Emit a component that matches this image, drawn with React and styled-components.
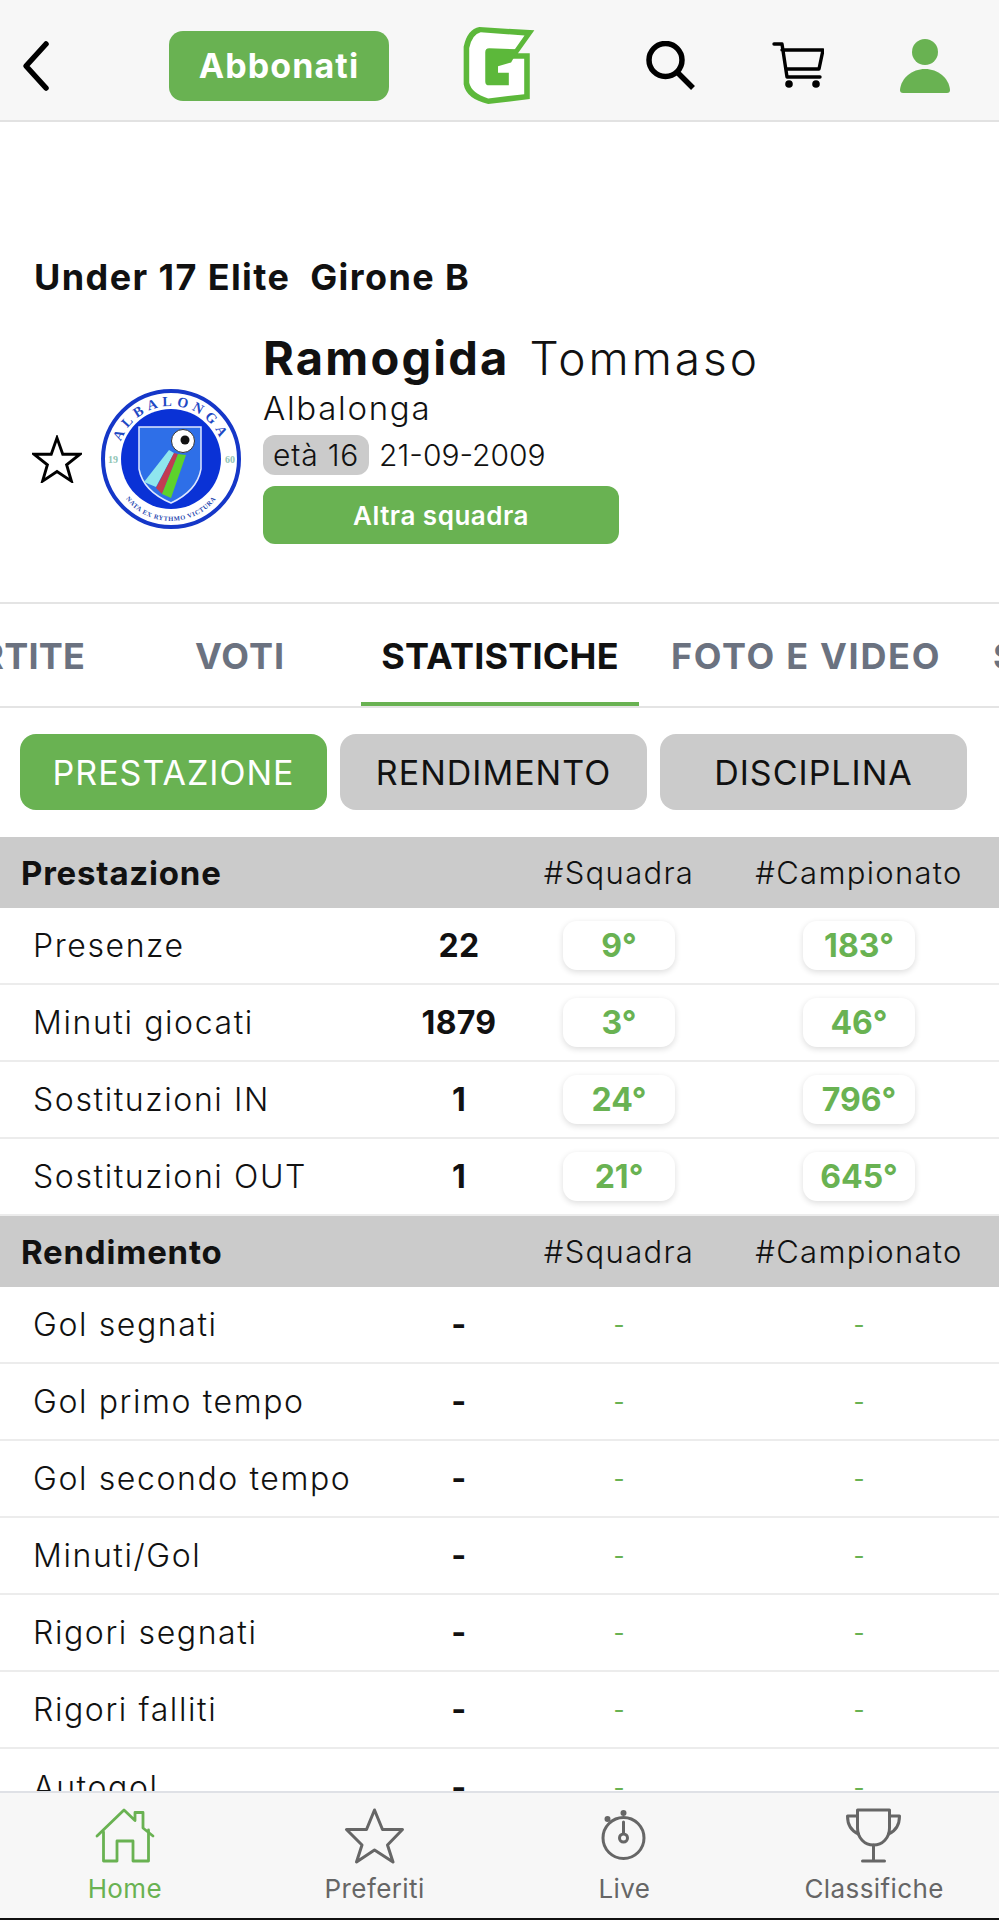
import React from 'react'
import styled, { createGlobalStyle } from 'styled-components'

const GREEN = '#69b252'
const FONT = 'Inter, "Noto Sans", sans-serif'

const Global = createGlobalStyle`
  html, body { margin: 0; padding: 0; background: #fff; }
  * { box-sizing: border-box; }
`
const Page = styled.div`
  width: 999px;
  height: 1920px;
  display: flex;
  flex-direction: column;
  overflow: hidden;
  background: #fff;
  font-family: ${FONT};
  color: #111;
`
const Header = styled.header`
  flex: none;
  height: 122px;
  background: #f7f7f7;
  border-bottom: 2px solid #e2e2e2;
  display: flex;
  align-items: center;
  padding: 11px 0 0 22px;
`
const BackIcon = styled.svg`
  width: 28px;
  height: 52px;
  margin-right: 119px;
`
const SubscribeButton = styled.button`
  width: 220px;
  height: 70px;
  border: 0;
  border-radius: 14px;
  background: ${GREEN};
  color: #fff;
  font: 700 34px ${FONT};
  letter-spacing: 1.1px;
  margin-right: 74px;
`
const LogoSvg = styled.svg`
  width: 72px;
  height: 78px;
  margin-right: 111px;
`
const SearchSvg = styled.svg`
  width: 50px;
  height: 50px;
  margin-right: 76px;
`
const CartSvg = styled.svg`
  width: 52px;
  height: 48px;
  margin-right: 76px;
`
const UserSvg = styled.svg`
  width: 50px;
  height: 54px;
`
const Scroll = styled.main`
  flex: 1;
  min-height: 0;
  overflow: hidden;
`
const Profile = styled.section`
  padding: 135px 0 58px 34px;
  border-bottom: 2px solid #e4e4e4;
`
const League = styled.h1`
  margin: 0 0 33px;
  font-size: 36px;
  line-height: 40px;
  font-weight: 700;
  white-space: pre;
  letter-spacing: 1.4px;
`
const ProfileRow = styled.div`
  display: flex;
  align-items: flex-end;
`
const Badge = styled.div`
  display: flex;
  align-items: center;
  height: 142px;
  margin-bottom: 14px;
  margin-right: 20px;
`
const StarSvg = styled.svg`
  width: 50px;
  height: 48px;
  margin-left: -2px;
  margin-right: 19px;
`
const Crest = styled.svg`
  width: 142px;
  height: 142px;
`
const Info = styled.div`
  display: flex;
  flex-direction: column;
  align-items: flex-start;
`
const NameLine = styled.div`
  display: flex;
  gap: 20px;
  line-height: 56px;
`
const Surname = styled.strong`
  font-size: 47px;
  font-weight: 700;
  letter-spacing: 2.2px;
`
const FirstName = styled.span`
  font-size: 46px;
  font-weight: 300;
  letter-spacing: 3px;
`
const Club = styled.div`
  font-size: 33px;
  font-weight: 300;
  line-height: 44px;
  letter-spacing: 1.7px;
`
const MetaRow = styled.div`
  display: flex;
  align-items: center;
  gap: 10px;
  margin-top: 5px;
  font-size: 30px;
  font-weight: 300;
`
const AgePill = styled.span`
  height: 40px;
  line-height: 40px;
  padding: 0 10px;
  border-radius: 12px;
  background: #cbcbcb;
  letter-spacing: 0.8px;
`
const OtherTeam = styled.button`
  width: 356px;
  height: 58px;
  margin-top: 11px;
  border: 0;
  border-radius: 12px;
  background: ${GREEN};
  color: #fff;
  font: 600 26px ${FONT};
  letter-spacing: 0.5px;
`
const Tabs = styled.nav`
  height: 104px;
  display: flex;
  border-bottom: 2px solid #e4e4e4;
  overflow: hidden;
`
const Tab = styled.div`
  flex: none;
  width: ${p => p.$w}px;
  margin-right: ${p => p.$gap || 0}px;
  display: flex;
  align-items: center;
  justify-content: ${p => p.$edge || 'center'};
  height: 104px;
  white-space: nowrap;
  overflow: hidden;
  font-size: 36px;
  font-weight: 700;
  letter-spacing: ${p => p.$ls || 0.2}px;
  color: ${p => (p.$active ? '#111' : '#6b7280')};
  border-bottom: ${p => (p.$active ? `6px solid ${GREEN}` : '0')};
  padding-top: ${p => (p.$active ? '6px' : '0')};
`
const Filters = styled.div`
  display: flex;
  gap: 13px;
  padding: 26px 0 27px 20px;
`
const Filter = styled.button`
  width: 307px;
  height: 76px;
  border: 0;
  border-radius: 16px;
  background: ${p => (p.$active ? GREEN : '#cbcbcb')};
  color: ${p => (p.$active ? '#fff' : '#111')};
  font: 400 34px ${FONT};
  letter-spacing: 1px;
`
const Columns = styled.div`
  display: grid;
  grid-template-columns: 399px 120px 200px 280px;
  align-items: center;
`
const SectionHead = styled(Columns)`
  height: 71px;
  background: #cbcbcb;
  font-size: 31px;
  font-weight: 300;
  letter-spacing: 1.3px;
`
const SectionTitle = styled.div`
  padding-left: 21px;
  font-size: 33px;
  font-weight: 700;
  letter-spacing: 0.8px;
`
const ColTitle = styled.div`
  grid-column: ${p => p.$col};
  text-align: center;
  white-space: nowrap;
`
const Row = styled(Columns)`
  height: 77px;
  border-bottom: 2px solid #ececec;
  &:last-child { border-bottom: 0; }
`
const Label = styled.div`
  padding-left: 33px;
  font-size: 32px;
  font-weight: 300;
  letter-spacing: 1.6px;
`
const Value = styled.div`
  text-align: center;
  font-size: 32px;
  font-weight: 700;
  letter-spacing: 0.3px;
`
const Rank = styled.div`
  justify-self: center;
  width: 112px;
  height: 49px;
  line-height: 49px;
  border-radius: 14px;
  background: #fff;
  box-shadow: 0 2px 6px rgba(0, 0, 0, 0.14);
  text-align: center;
  color: ${GREEN};
  font-size: 32px;
  font-weight: 700;
`
const NoRank = styled.div`
  text-align: center;
  color: ${GREEN};
  font-size: 24px;
`
const BottomNav = styled.footer`
  flex: none;
  height: 129px;
  background: #f7f7f7;
  border-top: 2px solid #dfe1e6;
  border-bottom: 2px solid #111;
  display: grid;
  grid-template-columns: repeat(4, 1fr);
`
const NavItem = styled.div`
  display: flex;
  flex-direction: column;
  align-items: center;
  padding-top: 15px;
  color: ${p => (p.$active ? GREEN : '#666')};
  font-size: 26px;
  font-weight: 400;
  letter-spacing: 0.4px;
`
const NavIcon = styled.svg`
  width: 64px;
  height: 56px;
`
const NavLabel = styled.span`
  margin-top: 10px;
  line-height: 30px;
`

const performance = [
  ['Presenze', '22', '9°', '183°'],
  ['Minuti giocati', '1879', '3°', '46°'],
  ['Sostituzioni IN', '1', '24°', '796°'],
  ['Sostituzioni OUT', '1', '21°', '645°'],
]
const output = ['Gol segnati', 'Gol primo tempo', 'Gol secondo tempo', 'Minuti/Gol', 'Rigori segnati', 'Rigori falliti', 'Autogol']

const Head = ({ title }) => (
  <SectionHead>
    <SectionTitle>{title}</SectionTitle>
    <ColTitle $col={3}>#Squadra</ColTitle>
    <ColTitle $col={4}>#Campionato</ColTitle>
  </SectionHead>
)

const App = () => (
  <Page>
    <Global />
    <Header>
      <BackIcon viewBox="0 0 28 52">
        <path d="M24 4L4 26l20 22" fill="none" stroke="#000" strokeWidth="5.5" strokeLinecap="round" strokeLinejoin="round" />
      </BackIcon>
      <SubscribeButton>Abbonati</SubscribeButton>
      <LogoSvg viewBox="38 20 220 238">
        <path d="M256 30L88 20Q52 26 40 80V195Q48 240 115 255L242 240V100H206z" fill="#5cb83a" />
        <path d="M226 46L92 36Q66 42 57 84V190Q64 222 115 238L225 225V117H176z" fill="#fff" />
        <path d="M118 85L208 88 185 128 145 140V160H178V198H118Q106 198 106 186V97Q106 85 118 85z" fill="#5cb83a" />
      </LogoSvg>
      <SearchSvg viewBox="0 0 50 50">
        <circle cx="19.5" cy="19" r="16.5" fill="none" stroke="#000" strokeWidth="5.5" />
        <path d="M32 32l15 15" stroke="#000" strokeWidth="5.5" />
      </SearchSvg>
      <CartSvg viewBox="0 0 52 48">
        <path d="M2 2h8l5 33h33M10 8h41l-4 19H14" fill="none" stroke="#000" strokeWidth="3.4" strokeLinecap="round" strokeLinejoin="round" />
        <circle cx="17" cy="42" r="3.8" fill="#000" />
        <circle cx="44" cy="42" r="3.8" fill="#000" />
      </CartSvg>
      <UserSvg viewBox="0 0 50 54">
        <circle cx="25" cy="13" r="13" fill={GREEN} />
        <path d="M3 54q-3 0-3-3c1-12 12-21 25-21s24 9 25 21q0 3-3 3z" fill={GREEN} />
      </UserSvg>
    </Header>
    <Scroll>
      <Profile>
        <League>Under 17 Elite  Girone B</League>
        <ProfileRow>
          <Badge>
            <StarSvg viewBox="0 0 50 50">
              <path d="M25 3l6 17h18L35 31l5 17-15-10-15 10 5-17L1 20h18z" fill="none" stroke="#000" strokeWidth="3" />
            </StarSvg>
            <Crest viewBox="0 0 142 142">
              <defs>
                <path id="crest-top" d="M17 71a53 53 0 0 1 106 0" />
                <path id="crest-bottom" d="M13 76a57 57 0 0 0 114 0" />
              </defs>
              <circle cx="70" cy="71" r="68" fill="#fff" stroke="#1537c8" strokeWidth="4" />
              <circle cx="70" cy="71" r="50" fill="#0a32d6" />
              <text fontFamily="Liberation Serif" fontSize="14" fontWeight="700" fill="#1f49c4" letterSpacing="4.5">
                <textPath href="#crest-top" startOffset="50%" textAnchor="middle">ALBALONGA</textPath>
              </text>
              <text fontFamily="Liberation Serif" fontSize="6.5" fontWeight="700" fill="#2a4ab0" letterSpacing="0.6">
                <textPath href="#crest-bottom" startOffset="50%" textAnchor="middle">NATA EX RYTHMO VICTURA</textPath>
              </text>
              <text x="7" y="75" fontFamily="Liberation Serif" fontSize="10" fontWeight="700" fill="#8fc4b4">19</text>
              <text x="124" y="75" fontFamily="Liberation Serif" fontSize="10" fontWeight="700" fill="#8fc4b4">60</text>
              <path d="M38 39h62v42q-4 22-30 34Q42 103 38 81z" fill="#2e6fe8" stroke="#dfe8ff" strokeWidth="1.5" />
              <path d="M43 94l12 5 18-34-5-3z" fill="#8fe6ee" />
              <path d="M55 100l6 6 16-40-4-1z" fill="#c23b52" />
              <path d="M61 106l9 4 15-43-8-1z" fill="#5dd22c" />
              <circle cx="82" cy="53" r="11.5" fill="#fff" stroke="#333" strokeWidth="1" />
              <circle cx="84" cy="52" r="4.5" fill="#111" />
            </Crest>
          </Badge>
          <Info>
            <NameLine>
              <Surname>Ramogida</Surname>
              <FirstName>Tommaso</FirstName>
            </NameLine>
            <Club>Albalonga</Club>
            <MetaRow>
              <AgePill>età 16</AgePill>
              <span>21-09-2009</span>
            </MetaRow>
            <OtherTeam>Altra squadra</OtherTeam>
          </Info>
        </ProfileRow>
      </Profile>
      <Tabs>
        <Tab $w={85} $gap={110} $edge="flex-end">PARTITE</Tab>
        <Tab $w={90} $gap={76} $ls={1}>VOTI</Tab>
        <Tab $w={278} $gap={33} $active>STATISTICHE</Tab>
        <Tab $w={268} $gap={53} $ls={1.7}>FOTO E VIDEO</Tab>
        <Tab $w={100} $edge="flex-start">STORICO</Tab>
      </Tabs>
      <Filters>
        <Filter $active>PRESTAZIONE</Filter>
        <Filter>RENDIMENTO</Filter>
        <Filter>DISCIPLINA</Filter>
      </Filters>
      <Head title="Prestazione" />
      {performance.map(([label, value, team, league]) => (
        <Row key={label}>
          <Label>{label}</Label>
          <Value>{value}</Value>
          <Rank>{team}</Rank>
          <Rank>{league}</Rank>
        </Row>
      ))}
      <Head title="Rendimento" />
      {output.map(label => (
        <Row key={label}>
          <Label>{label}</Label>
          <Value>-</Value>
          <NoRank>-</NoRank>
          <NoRank>-</NoRank>
        </Row>
      ))}
    </Scroll>
    <BottomNav>
      <NavItem $active>
        <NavIcon viewBox="0 0 64 56" fill="none" stroke="currentColor" strokeWidth="2.8" strokeLinecap="round" strokeLinejoin="round">
          <path d="M4 28L31 2l11 10.5V4.5h8V20l10 8" />
          <path d="M10.5 24v29H24V33h16v20h15.5V22" />
        </NavIcon>
        <NavLabel>Home</NavLabel>
      </NavItem>
      <NavItem>
        <NavIcon viewBox="0 0 64 56" fill="none" stroke="currentColor" strokeWidth="3" strokeLinejoin="round">
          <path d="M31.5 2l8 19.5h20L44.500 37l5.500 17-18.500-12L13.500 54l5.500-17L3.500 21.500h20z" />
        </NavIcon>
        <NavLabel>Preferiti</NavLabel>
      </NavItem>
      <NavItem>
        <NavIcon viewBox="0 0 64 56" fill="none" stroke="currentColor" strokeWidth="3" strokeLinecap="round">
          <circle cx="31.500" cy="30" r="20.500" />
          <path d="M31.500 14v11" />
          <circle cx="31.500" cy="30" r="4" />
          <circle cx="31.500" cy="5" r="1.500" fill="currentColor" />
          <circle cx="15.500" cy="11" r="1.500" fill="currentColor" />
        </NavIcon>
        <NavLabel>Live</NavLabel>
      </NavItem>
      <NavItem>
        <NavIcon viewBox="0 0 64 56" fill="none" stroke="currentColor" strokeWidth="3" strokeLinecap="round" strokeLinejoin="round">
          <path d="M15.500 2h32v18c0 10-7 17-16 17s-16-7-16-17z" />
          <path d="M15.500 8h-10c0 9 4 15 11 18M47.500 8h10c0 9-4 15-11 18M31.500 37v15M20.500 53h22" />
        </NavIcon>
        <NavLabel>Classifiche</NavLabel>
      </NavItem>
    </BottomNav>
  </Page>
)

export default App
